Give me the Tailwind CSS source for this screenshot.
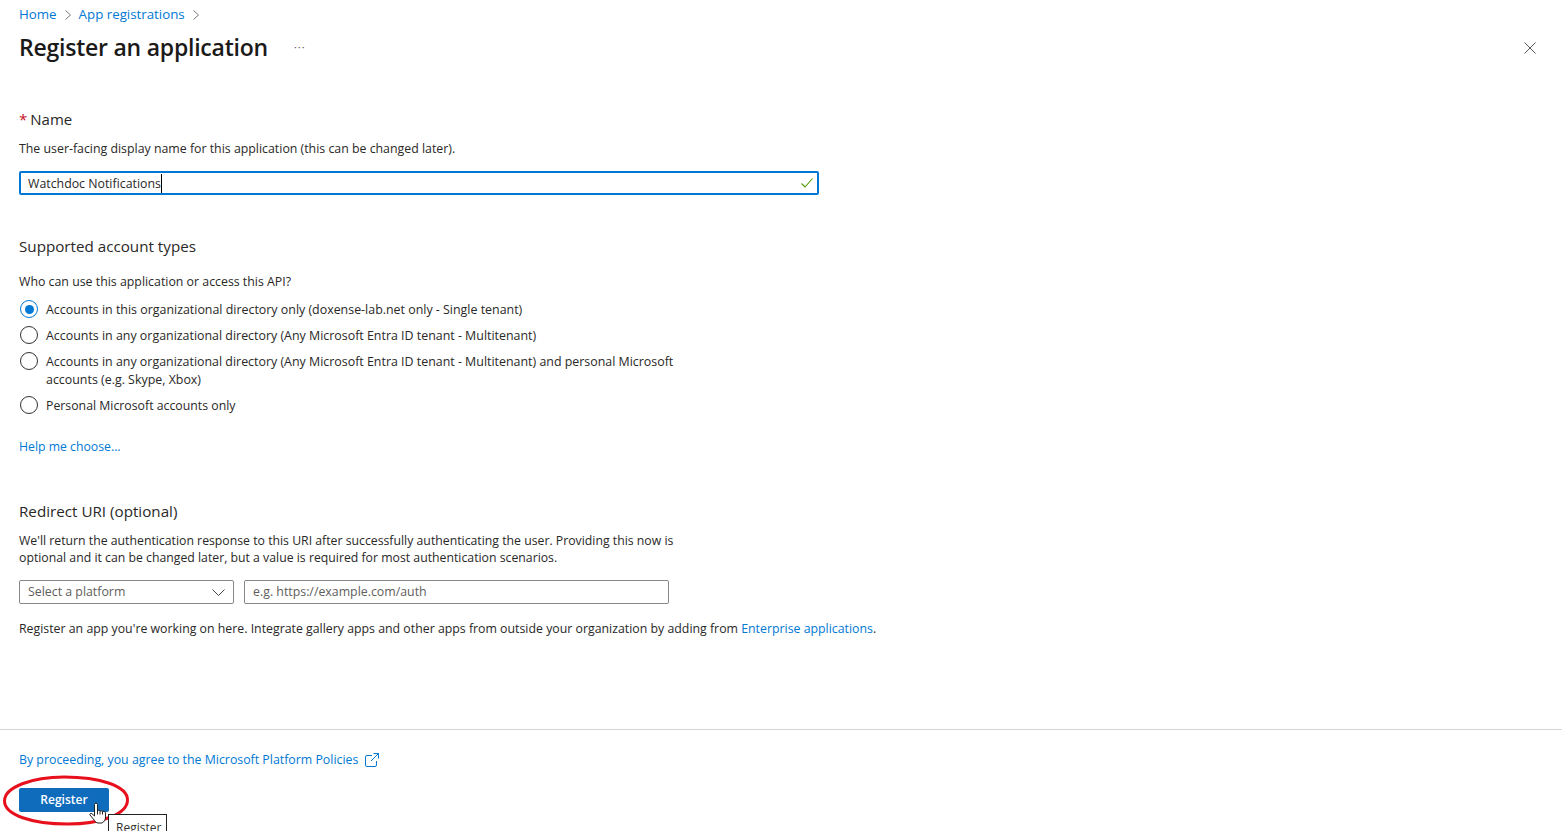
<!DOCTYPE html>
<html lang="en">
<head>
  <meta charset="UTF-8" />
  <title>Register an application</title>
  <script src="https://cdn.jsdelivr.net/npm/@tailwindcss/browser@4"></script>
</head>
<body class="bg-white font-['Open_Sans',sans-serif] text-[12.35px] text-[#292827] overflow-hidden">
  <div class="relative h-[831px] w-[1562px] overflow-hidden">

    <!-- header -->
    <nav class="flex items-center h-[15px] mt-[7px] pl-[19px] text-[13.3px] text-[#0078d4]">
      <a href="#">Home</a>
      <svg class="w-[6px] h-[10px] mx-[8px]" viewBox="0 0 6 10" fill="none" stroke="#777" stroke-width="1"><path d="M0.5 0.5l5 4.5-5 4.5"/></svg>
      <a href="#">App registrations</a>
      <svg class="w-[6px] h-[10px] mx-[8px]" viewBox="0 0 6 10" fill="none" stroke="#777" stroke-width="1"><path d="M0.5 0.5l5 4.5-5 4.5"/></svg>
    </nav>
    <div class="flex items-center h-[36px] mt-[7px] pl-[19px] pr-[26px]">
      <h1 class="text-[23px] font-semibold text-[#1b1a19] tracking-[-0.23px]">Register an application</h1>
      <span class="ml-[26px] text-[11px] text-[#555] tracking-[1px]">···</span>
      <svg class="ml-auto w-[12px] h-[12px] mt-[1px]" viewBox="0 0 12 12" stroke="#555" stroke-width="1"><path d="M0.5 0.5l11 11M11.5 0.5l-11 11"/></svg>
    </div>

    <!-- form -->
    <main class="pl-[19px]">
      <section class="mt-[45px]">
        <h2 class="text-[15px] leading-[18px] pb-[2px]"><span class="text-[#c50f1f] mr-[3px]">*</span>Name</h2>
        <p class="mt-[9px] leading-[20px]">The user-facing display name for this application (this can be changed later).</p>
        <div class="mt-[12px] flex items-center w-[800px] h-[24px] border-2 border-[#0078d4] rounded-[2px] pl-[7px] pr-[4px]">
          <span class="border-r border-black leading-[18px] pr-[0.5px] pt-px">Watchdoc Notifications</span>
          <svg class="ml-auto w-[12px] h-[10px]" viewBox="0 0 12 10" fill="none" stroke="#4f9a00" stroke-width="1.100"><path d="M0.5 5.5l3.5 3.5 7.5-8.500"/></svg>
        </div>
      </section>

      <section class="mt-[41px]">
        <h2 class="text-[15.2px] leading-[20px]">Supported account types</h2>
        <p class="mt-[16px] leading-[20px]">Who can use this application or access this API?</p>
        <ul class="mt-[9px] w-[670px] text-[12.42px]">
          <li class="flex gap-[8px] h-[26px] pl-px">
            <span class="-mt-px flex shrink-0 items-center justify-center w-[18px] h-[18px] rounded-full border border-[#0078d4]"><span class="w-[9px] h-[9px] rounded-full bg-[#0078d4]"></span></span>
            <span class="leading-[18px]">Accounts in this organizational directory only (doxense-lab.net only - Single tenant)</span>
          </li>
          <li class="flex gap-[8px] h-[26px] pl-px">
            <span class="-mt-px shrink-0 w-[18px] h-[18px] rounded-full border border-[#323130]"></span>
            <span class="leading-[18px]">Accounts in any organizational directory (Any Microsoft Entra ID tenant - Multitenant)</span>
          </li>
          <li class="flex gap-[8px] h-[44px] pl-px">
            <span class="-mt-px shrink-0 w-[18px] h-[18px] rounded-full border border-[#323130]"></span>
            <span class="leading-[18px]">Accounts in any organizational directory (Any Microsoft Entra ID tenant - Multitenant) and personal Microsoft accounts (e.g. Skype, Xbox)</span>
          </li>
          <li class="flex gap-[8px] h-[26px] pl-px">
            <span class="-mt-px shrink-0 w-[18px] h-[18px] rounded-full border border-[#323130]"></span>
            <span class="leading-[18px] text-[12.3px]">Personal Microsoft accounts only</span>
          </li>
        </ul>
        <a href="#" class="block mt-[14px] leading-[20px] text-[#0078d4] text-[12.25px]">Help me choose...</a>
      </section>

      <section class="mt-[44px]">
        <h2 class="text-[15.2px] leading-[20px]">Redirect URI (optional)</h2>
        <p class="mt-[11px] w-[670px] leading-[17px] text-[12.27px]">We'll return the authentication response to this URI after successfully authenticating the user. Providing this now is optional and it can be changed later, but a value is required for most authentication scenarios.</p>
        <div class="mt-[14px] flex gap-[10px] text-[#605e5c]">
          <div class="flex items-center justify-between w-[215px] h-[24px] border border-[#8a8886] rounded-[2px] pl-[8px] pr-[8px]">
            <span class="pt-px">Select a platform</span>
            <svg class="w-[13px] h-[7px]" viewBox="0 0 13 7" fill="none" stroke="#444" stroke-width="1"><path d="M0.5 0.5l6 6 6-6"/></svg>
          </div>
          <div class="flex items-center w-[425px] h-[24px] border border-[#8a8886] rounded-[2px] pl-[8px] pt-px">e.g. https://example.com/auth</div>
        </div>
        <p class="mt-[16px] leading-[18px] text-[12.34px]">Register an app you're working on here. Integrate gallery apps and other apps from outside your organization by adding from <a href="#" class="text-[#0078d4]">Enterprise applications</a>.</p>
      </section>
    </main>

    <!-- footer -->
    <footer class="mt-[91px] border-t border-[#d6d6d6] pl-[19px] pt-[20px]">
      <a href="#" class="flex items-center leading-[20px] text-[#0078d4]">
        By proceeding, you agree to the Microsoft Platform Policies
        <svg class="ml-[7px] w-[14px] h-[14px]" viewBox="0 0 14 14" fill="none" stroke="#0078d4" stroke-width="1"><path d="M7 2.5H2a1.5 1.5 0 0 0-1.5 1.5v8A1.5 1.5 0 0 0 2 13.500h8a1.500 1.500 0 0 0 1.500-1.500V8M8.500 0.500h5v5M13.500 0.500L6 8"/></svg>
      </a>
      <button class="block mt-[18px] w-[90px] h-[24px] rounded-[2px] bg-[#0f6cbd] text-white font-semibold text-[12px]">Register</button>
    </footer>

    <!-- annotation, cursor and tooltip on top of the page -->
    <svg class="absolute left-[2px] top-[774px] w-[128px] h-[54px]" viewBox="0 0 128 54" fill="none" stroke="#e8101c" stroke-width="3"><path d="M2.500 27C2.500 13 30 3 62 3c36 0 63.500 9 63.500 23 0 14-26 24-60 24C30 50 2.500 41 2.500 27z"/></svg>
    <div class="absolute left-[108px] top-[814px] w-[59px] h-[30px] border border-[#222] bg-white pl-[7px] pt-[4px] text-[12px] text-[#333]">Register</div>
    <svg class="absolute left-[89px] top-[802px] w-[20px] h-[24px]" viewBox="0 0 20 24" fill="#fff" stroke="#222" stroke-width="1"><path d="M5.500 2.500c0-1.800 3-1.800 3 0v6.500c.5-1 2.500-1 2.500.5.500-1 2.500-1 2.500.5.500-.8 3-.8 3 .8v4.200c0 3-1.500 5-3.500 6H9c-1.500 0-2.500-1-3.500-2.500L1 13c-.7-1.200 1-2.200 2-1.200l2.500 2.200z"/><path d="M8.500 9v3.500M11 9.500v3M13.500 10v2.500"/></svg>
  </div>
</body>
</html>
